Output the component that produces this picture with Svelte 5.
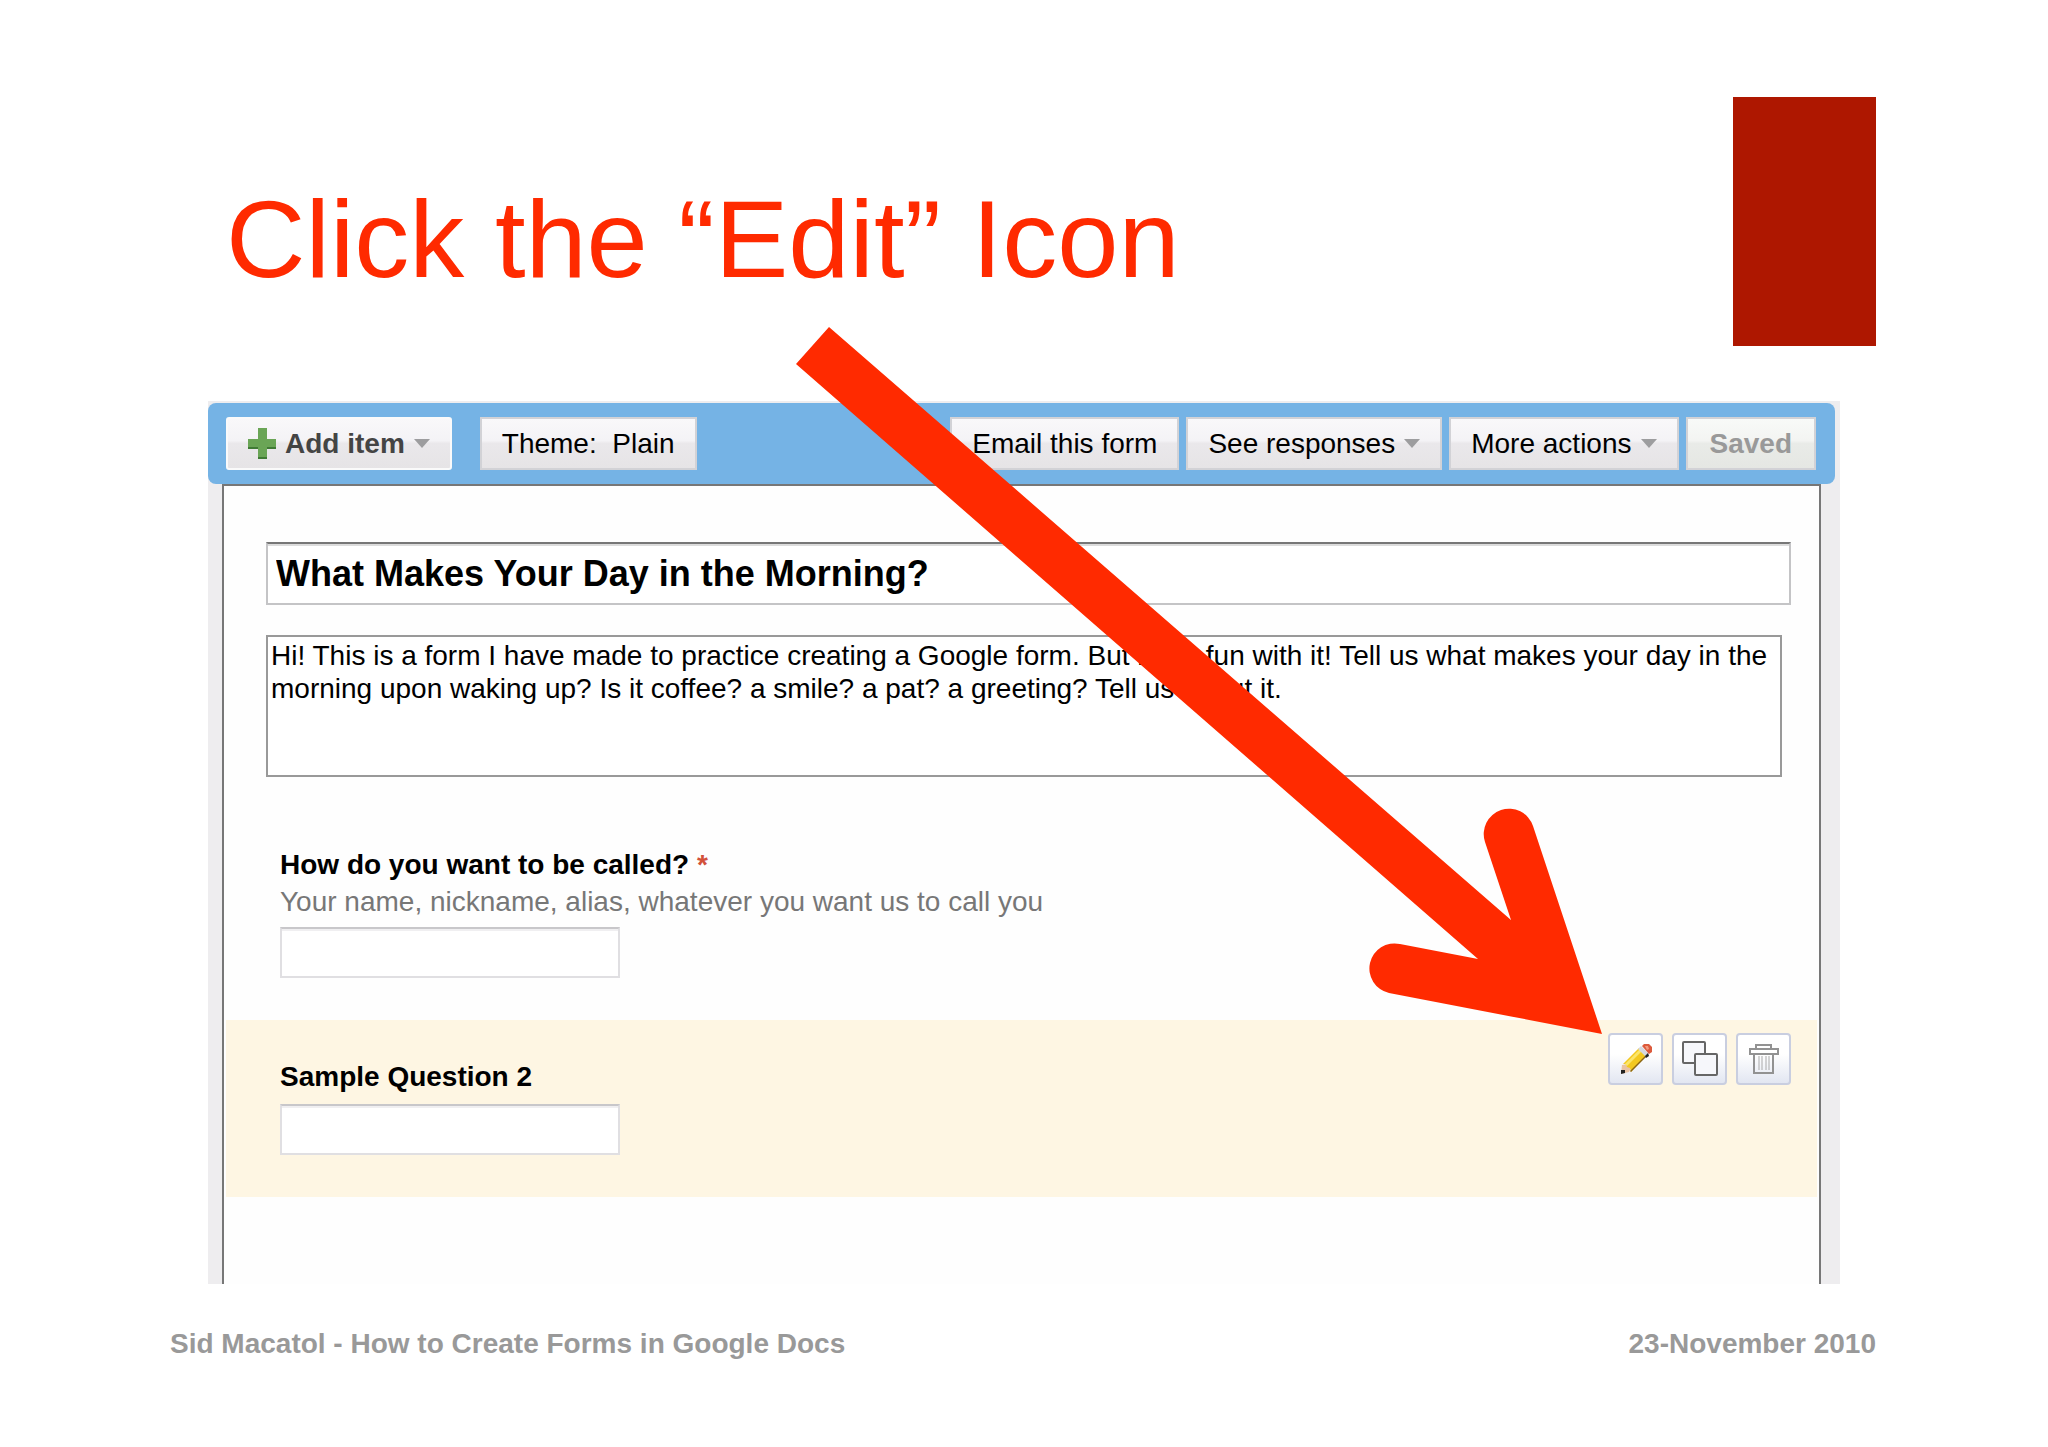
<script>
    let formTitle = $state('What Makes Your Day in the Morning?');
    let formIntro = $state(
        'Hi! This is a form I have made to practice creating a Google form. But have fun with it! Tell us what makes your day in the morning upon waking up? Is it coffee? a smile? a pat? a greeting? Tell us about it.'
    );
    let answers = $state({ name: '', sample: '' });

    const actions = [
        { label: 'Email this form', menu: false },
        { label: 'See responses', menu: true },
        { label: 'More actions', menu: true }
    ];
</script>

{#snippet caret()}
    <svg class="caret" viewBox="0 0 16 9" aria-hidden="true"><path d="M0 0h16L8 9z" /></svg>
{/snippet}

<main class="slide">
    <header>
        <h1>Click the “Edit” Icon</h1>
        <div class="block"></div>
    </header>

    <section class="editor">
        <div class="toolbar">
            <button class="btn add">
                <svg class="plus" viewBox="0 0 28 31" aria-hidden="true">
                    <path d="M10 0h9v11h9v10h-9v10h-9V21H0V11h10z" fill="#6aa556" />
                    <path d="M0 19h10v2H0zM19 19h9v2h-9zM10 29h9v2h-9z" fill="#3f7a35" />
                </svg>
                Add item
                {@render caret()}
            </button>
            <button class="btn">Theme:&nbsp; Plain</button>
            <div class="actions">
                {#each actions as action}
                    <button class="btn">
                        {action.label}
                        {#if action.menu}{@render caret()}{/if}
                    </button>
                {/each}
                <button class="btn saved" disabled>Saved</button>
            </div>
        </div>

        <div class="paper">
            <div class="intro">
                <input class="form-title" aria-label="Form title" bind:value={formTitle} />
                <textarea class="form-intro" aria-label="Form description" bind:value={formIntro}></textarea>
            </div>

            <div class="question">
                <label for="name">How do you want to be called? <span class="required">*</span></label>
                <p class="help">Your name, nickname, alias, whatever you want us to call you</p>
                <input class="answer" id="name" bind:value={answers.name} />
            </div>

            <div class="question active">
                <div class="field">
                    <label for="sample">Sample Question 2</label>
                    <input class="answer" id="sample" bind:value={answers.sample} />
                </div>
                <div class="tools">
                    <button class="tool" aria-label="Edit">
                        <svg viewBox="0 0 32 32" aria-hidden="true">
                            <path d="M1 31l1-9 5-1 4 4-2 4z" fill="#e9c3a4" />
                            <path d="M1 31v-4h4v3z" fill="#222" />
                            <path d="M3 21L19 5l8 7-16 17-1-4-3-1-1-3z" fill="#f3c81f" />
                            <path d="M5 21L20 6l2 2L7 23z" fill="#fbe56a" />
                            <path d="M10 28L26 12l1 1-16 16z" fill="#8a6414" />
                            <path d="M18 6l3-3 8 8-3 3z" fill="#d5d8df" />
                            <path d="M25 13l3-3 1 3-3 2z" fill="#222" />
                            <path d="M22 3l2-2h5l3 3v5l-3 2z" fill="#dc5a3c" />
                            <path d="M25 3l3 0 1 3-2 1z" fill="#f39a7e" />
                        </svg>
                    </button>
                    <button class="tool" aria-label="Duplicate">
                        <svg class="copy" viewBox="0 0 36 36" aria-hidden="true">
                            <rect x="1" y="1" width="22" height="21" rx="1" />
                            <rect x="13" y="13" width="22" height="21" rx="1" />
                        </svg>
                    </button>
                    <button class="tool" aria-label="Delete">
                        <svg class="trash" viewBox="0 0 32 32" aria-hidden="true">
                            <path d="M8 6V2h15v4M2 6h28v5H2zM6 11v19h19V11" />
                            <path class="slats" d="M11 13v14M14 13v14M18 13v14M21 13v14" />
                        </svg>
                    </button>
                </div>
            </div>
        </div>

        <svg class="pointer" viewBox="0 0 806 707" aria-hidden="true">
            <path d="M33 0L715 593L689 515A25 25 0 0 1 737 499L806 707L593 666A25 25 0 0 1 604 617L682 632L0 37Z" />
        </svg>
    </section>

    <footer>
        <span>Sid Macatol - How to Create Forms in Google Docs</span>
        <span>23-November 2010</span>
    </footer>
</main>

<style>
    :global(body) {
        background: #fff;
    }
    .slide {
        padding: 97px 172px 80px 170px;
        font-family: 'Liberation Sans', Arial, sans-serif;
        font-size: 28px;
        line-height: 36px;
        color: #000;
    }
    header {
        display: flex;
        justify-content: space-between;
        height: 249px;
    }
    h1 {
        margin: 78px 0 0 56px;
        font-size: 110px;
        font-weight: 400;
        line-height: 128px;
        color: #ff2a00;
    }
    .block {
        width: 143px;
        background: #ae1700;
    }

    .editor {
        position: relative;
        margin: 55px 36px 0 38px;
        padding-top: 2px;
        background: #eeedef;
    }
    .toolbar {
        display: flex;
        align-items: center;
        height: 81px;
        margin-right: 5px;
        padding: 0 19px 0 18px;
        box-sizing: border-box;
        background: #75b3e5;
        border-radius: 8px;
    }
    .actions {
        display: flex;
        gap: 7px;
        margin-left: auto;
    }
    .btn {
        display: flex;
        align-items: center;
        gap: 9px;
        height: 53px;
        padding: 0 20px;
        border: 2px solid #d2d2d6;
        background: linear-gradient(#f9f8fa 0%, #f4f3f6 44%, #eae8eb 50%, #e6e4e6 100%);
        font: inherit;
        color: #000;
        white-space: nowrap;
    }
    .add {
        margin-right: 28px;
        border-color: #fafafa;
        border-radius: 3px;
        font-weight: 700;
        color: #444;
    }
    .saved {
        padding: 0 22px;
        background: linear-gradient(#f8faf8 0%, #f3f4f2 44%, #e9ebe8 50%, #e5e7e3 100%);
        font-weight: 700;
        color: #999;
    }
    .plus {
        width: 28px;
        height: 31px;
    }
    .caret {
        width: 16px;
        height: 9px;
        fill: #9d9d9f;
    }

    .paper {
        height: 798px;
        margin: 0 19px 0 14px;
        border: 2px solid #777;
        border-bottom: 0;
        background: #fefefe;
    }
    .intro {
        display: flex;
        flex-direction: column;
        gap: 30px;
        padding: 56px 28px 0 42px;
    }
    input,
    textarea {
        box-sizing: border-box;
        margin: 0;
        background: #fff;
        font: inherit;
        color: inherit;
    }
    .form-title {
        height: 63px;
        padding: 0 8px;
        border: 2px solid #c4c4c6;
        border-top-color: #777;
        box-shadow: inset 0 2px #dcdcdc;
        font-size: 36px;
        font-weight: 700;
    }
    .form-intro {
        height: 142px;
        margin-right: 9px;
        padding: 2px 3px;
        border: 2px solid #999;
        line-height: 33px;
        resize: none;
    }
    .question {
        padding: 70px 28px 42px 56px;
    }
    label {
        display: block;
        font-weight: 700;
    }
    .required {
        color: #d2513a;
    }
    .help {
        margin: 0;
        line-height: 38px;
        color: #777;
    }
    .answer {
        display: block;
        width: 340px;
        height: 51px;
        margin-top: 6px;
        border: 2px solid #e0dfe2;
        border-top-color: #c8c7ca;
        box-shadow: inset 0 2px #f0eff1;
    }
    .active {
        display: flex;
        justify-content: space-between;
        margin: 0 2px;
        padding: 13px 26px 42px 54px;
        background: #fef6e3;
    }
    .field {
        padding-top: 26px;
    }
    .field .answer {
        margin-top: 9px;
    }
    .tools {
        display: flex;
        gap: 9px;
    }
    .tool {
        display: grid;
        place-items: center;
        width: 55px;
        height: 52px;
        padding: 0;
        border: 2px solid #c9cee0;
        border-radius: 4px;
        background: linear-gradient(#fff 40%, #e2e6f1);
    }
    .tool svg {
        width: 32px;
        height: 32px;
    }
    .tool .copy {
        width: 36px;
        height: 36px;
        fill: #f6f7fb;
        stroke: #666;
        stroke-width: 2;
    }
    .trash {
        fill: none;
        stroke: #929292;
        stroke-width: 2;
    }
    .slats {
        stroke: #aaa;
        stroke-width: 1;
    }

    /* the arrow lies over the form, its tip at the edit button */
    .pointer {
        position: absolute;
        top: -74px;
        right: 238px;
        width: 806px;
        height: 707px;
        fill: #ff2a00;
        pointer-events: none;
    }

    footer {
        display: flex;
        justify-content: space-between;
        margin-top: 42px;
        font-weight: 700;
        color: #999;
    }
</style>
